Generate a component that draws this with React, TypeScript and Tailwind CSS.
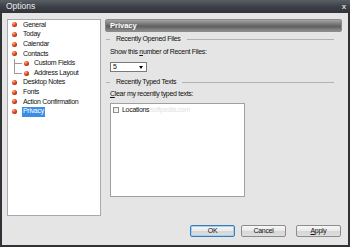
import React from "react";

const font = { fontFamily: '"Liberation Sans", Arial, sans-serif' };

function Bullet() {
  return (
    <span className="inline-block w-[5px] h-[5px] rounded-full shrink-0 bg-[radial-gradient(circle_at_35%_30%,#ffb08a_0%,#e0401c_45%,#8a1606_100%)]" />
  );
}

function TopItem({ label, selected }: { label: string; selected?: boolean }) {
  return (
    <div className="h-[9.65px] flex items-center pl-[4px]">
      <Bullet />
      {selected ? (
        <span className="ml-[5px] h-[10px] flex items-center px-[1px] whitespace-nowrap bg-[#3a8ee6] text-white">
          {label}
        </span>
      ) : (
        <span className="ml-[5px] px-[1px] whitespace-nowrap">{label}</span>
      )}
    </div>
  );
}

function ChildItem({ label, last }: { label: string; last?: boolean }) {
  return (
    <div className="h-[9.65px] flex items-stretch pl-[6px]">
      <div className="w-[8px] flex flex-col">
        <div className="flex-1 border-l border-b border-[#9a9a9a]" />
        <div className={"flex-1 " + (last ? "" : "border-l border-[#9a9a9a]")} />
      </div>
      <div className="flex items-center">
        <span className="ml-[2px] flex">
          <Bullet />
        </span>
        <span className="ml-[4px] px-[1px] whitespace-nowrap">{label}</span>
      </div>
    </div>
  );
}

function GroupLine({ label }: { label: string }) {
  return (
    <div className="h-[10px] flex items-center pl-[1px] pr-[8px]">
      <div className="w-[4px] h-px bg-[#b2b2b2]" />
      <span className="mx-[6px] whitespace-nowrap">{label}</span>
      <div className="flex-1 h-px bg-[#b2b2b2]" />
    </div>
  );
}

function Btn({ children, def }: { children: React.ReactNode; def?: boolean }) {
  return (
    <div
      className={
        "w-[45px] h-[12px] rounded-[2px] border flex items-center justify-center bg-[linear-gradient(#f7f7f7,#e9e9e9_50%,#d6d6d6_51%,#dedede)] " +
        (def ? "border-[#3b7cb5] shadow-[inset_0_0_0_1px_#9fd2f2]" : "border-[#8c8c8c]")
      }
    >
      {children}
    </div>
  );
}

export default function App() {
  return (
    <div
      className="w-[350px] h-[247px] flex flex-col bg-[#2f3338] text-[7px] tracking-[-0.3px] text-[#111] overflow-hidden"
      style={font}
    >
      {/* title bar */}
      <div className="h-[13px] flex items-center justify-between pl-[6px] pr-[4px] bg-[linear-gradient(#5a5f66,#3d4147_50%,#30343a)]">
        <span className="text-[8.5px] tracking-[0px] text-[#ececec]">Options</span>
        <span className="text-[8px] font-bold text-[#d8d8d8] leading-none">x</span>
      </div>
      {/* body */}
      <div className="flex-1 mx-[2px] mb-[2px] bg-[#e5e5e5] flex flex-col">
        <div className="flex pt-[6px] pl-[5px] gap-[4px]">
          {/* tree */}
          <div className="w-[94px] h-[197px] bg-white border border-[#a9a9ad] shrink-0">
            <TopItem label="General" />
            <TopItem label="Today" />
            <TopItem label="Calendar" />
            <TopItem label="Contacts" />
            <ChildItem label="Custom Fields" />
            <ChildItem label="Address Layout" last />
            <TopItem label="Desktop Notes" />
            <TopItem label="Fonts" />
            <TopItem label="Action Confirmation" />
            <TopItem label="Privacy" selected />
          </div>
          {/* right */}
          <div className="w-[237px] flex flex-col">
            <div className="h-[13px] rounded-[2px] border border-[#8a8a8a] bg-[linear-gradient(#a5a5a5,#6e6e6e_45%,#606060_60%,#8e8e8e)] flex items-center pl-[4px]">
              <span className="text-white font-bold text-[7.5px] tracking-[0px]">Privacy</span>
            </div>
            <div className="mt-[2px]">
              <GroupLine label="Recently Opened Files" />
            </div>
            <div className="mt-[3px] h-[10px] flex items-center pl-[5px]">
              <span>
                Show this <span className="underline">n</span>umber of Recent Files:
              </span>
            </div>
            <div className="mt-[5px] ml-[5px] w-[37px] h-[10px] bg-white border border-[#7a7a7a] flex items-center justify-between pl-[2px] pr-[3px]">
              <span>5</span>
              <span className="w-0 h-0 border-l-[2.5px] border-r-[2.5px] border-t-[3px] border-l-transparent border-r-transparent border-t-black" />
            </div>
            <div className="mt-[5px]">
              <GroupLine label="Recently Typed Texts" />
            </div>
            <div className="mt-[2px] h-[10px] flex items-center pl-[5px]">
              <span>
                <span className="underline">C</span>lear my recently typed texts:
              </span>
            </div>
            <div className="mt-[4px] ml-[5px] w-[135px] h-[94px] bg-white border border-[#a0a0a4] pt-[2px] pl-[2px]">
              <div className="h-[8px] flex items-center">
                <span className="w-[6px] h-[6px] border border-[#8e8f8f] bg-[linear-gradient(135deg,#e4e4e4,#ffffff)] shrink-0" />
                <span className="ml-[3px]">Locations</span>
                <span className="ml-[1px] text-[#e2e2e2]">softpedia.com</span>
              </div>
            </div>
          </div>
        </div>
        <div className="mt-[9px] flex justify-end pr-[7px]">
          <Btn def>OK</Btn>
          <div className="ml-[6px]">
            <Btn>Cancel</Btn>
          </div>
          <div className="ml-[10px]">
            <Btn>
              <span>
                <span className="underline">A</span>pply
              </span>
            </Btn>
          </div>
        </div>
      </div>
    </div>
  );
}
